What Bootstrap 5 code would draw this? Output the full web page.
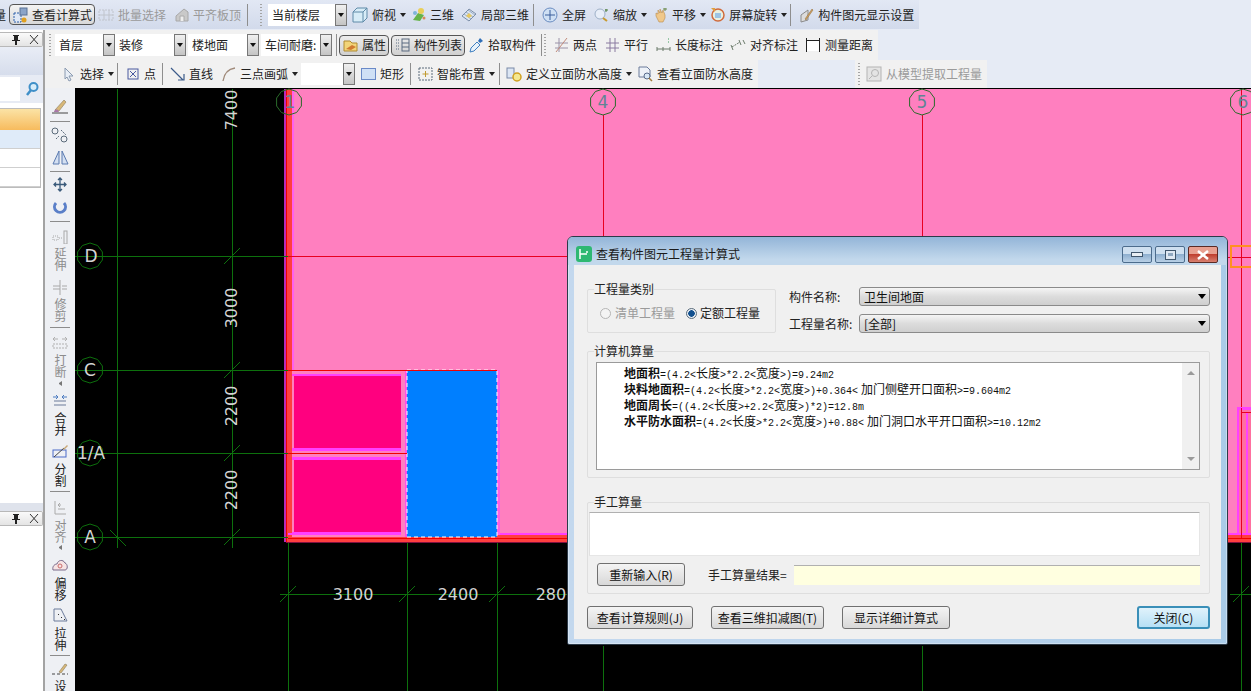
<!DOCTYPE html>
<html lang="zh-CN">
  <head>
    <meta charset="UTF-8" />
    <meta name="viewport" content="width=device-width, initial-scale=1.0" />
    <link rel="stylesheet" href="https://cdn.jsdelivr.net/npm/bootstrap@5.3.3/dist/css/bootstrap.min.css" />
    <title>查看构件图元工程量计算式</title>
    <style>
      body {
        width: 1251px;
        height: 691px;
        overflow: hidden;
        background: #e6ebf5;
        font: 12px/16px "Noto Sans CJK SC", "Liberation Sans", sans-serif;
        color: #222;
      }
      /* toolbars */
      .bar-one { height: 29px; margin-bottom: 1px; background: linear-gradient(#e2e8f4, #d2daeb); width: 919px; flex: none; }
      .bar-two { height: 30px; width: 833px; background: #f1f1f1; }
      .bar-three { height: 28px; width: 713px; background: #f1f1f1; }
      .bar-extra { height: 28px; width: 132px; margin-left: 97px; background: #f1f1f1; }
      .tool { display: inline-flex; align-items: center; gap: 4px; white-space: nowrap; flex: none; }
      .tool svg { flex: none; }
      .tool-off { color: #9a9a9a; }
      .caret-s { height: 0; border: 3px solid transparent; border-top: 4px solid #222; border-bottom: 0; flex: none; width: 6px; }
      .sep-v { width: 1px; height: 22px; background: #8e8e8e; flex: none; }
      .grip-v { width: 2px; height: 22px; flex: none; background: repeating-linear-gradient(#a4a4a4 0 1px, transparent 1px 3px); }
      .press { border: 1px solid #555; border-radius: 4px; background: linear-gradient(#f4f4f4, #d8d8d8); height: 21px; justify-content: flex-start; padding-left: 3px; }
      .press-calc { width: 86px; }
      .press-attr { width: 50px; background: linear-gradient(#ececec, #d0d0d0); }
      .press-list { width: 74px; background: linear-gradient(#ececec, #d0d0d0); }
      .drop { display: flex; height: 22px; background: #fff; flex: none; align-items: center; }
      .drop span { flex: 1; padding-left: 4px; overflow: hidden; white-space: nowrap; }
      .drop i { width: 12px; height: 22px; flex: none; background: linear-gradient(#f0f0f0, #c4c4c4); border: 1px solid #777; position: relative; }
      .drop i::after { content: ""; position: absolute; left: 2px; top: 8px; border: 3px solid transparent; border-top: 4px solid #111; border-bottom: 0; }
      .drop-a { width: 79px; }
      .drop-b { width: 60px; }
      .drop-c { width: 71px; }
      .drop-d { width: 54px; }
      .g2 { margin-left: 2px; } .g3 { margin-left: 3px; } .g4 { margin-left: 4px; }
      .g5 { margin-left: 5px; } .g6 { margin-left: 6px; } .g7 { margin-left: 7px; }
      .g8 { margin-left: 8px; } .g9 { margin-left: 9px; } .g11 { margin-left: 11px; } .g12 { margin-left: 12px; }
      .g18 { margin-left: 18px; }
      .clip-char { width: 6px; overflow: hidden; direction: rtl; flex: none; }
      /* left pane */
      .pane-left { width: 45px; flex: none; border-right: 2px solid #a3a3a3; background: #fff; }
      .pane-head { height: 15px; margin-top: 2px; display: flex; justify-content: flex-end; align-items: center; gap: 8px; padding-right: 3px; border: 1px solid #b8b8b8; border-left: 0; border-radius: 0 2px 2px 0; background: linear-gradient(#fafafa, #e4e4e4); font-size: 11px; }
      .pane-tab { height: 28px; background: linear-gradient(#e9edf6, #d6ddec); }
      .pane-search { height: 28px; background: #e7ebf4; display: flex; align-items: center; gap: 4px; }
      .pane-search i { width: 20px; height: 24px; background: #fff; }
      .pane-list { margin: 5px 2px 0 0; border: 1px solid #bcbcbc; border-left: 0; }
      .pane-row { height: 19px; border-bottom: 1px solid #cfcfcf; }
      .row-orange { height: 21px; background: linear-gradient(#fbe3a6, #f7bb5d); border: 0; }
      .row-blue { background: #dfebf9; }
      .pane-gap { height: 8px; background: #dfe3ec; }
      .pane-gap + .pane-head { margin-top: 0; }
      .pane-top { height: 473px; background: #fff; }
      .icon-pin { width: 10px; height: 11px; }
      /* side toolbar */
      .side-bar { width: 30px; flex: none; height: 603px; overflow: hidden; background: #eef0f4; align-items: center; color: #222; }
      .side-sep { width: 20px; height: 1px; background: #8c8c8c; flex: none; }
      .side-text { writing-mode: vertical-rl; line-height: 14px; flex: none; }
      .side-off { color: #8c8c8c; }
      .side-bar svg { flex: none; }
      .side-mark { width: 0; height: 5px; flex: none; border: 3px solid transparent; border-left: 0; border-right: 3px solid #777; border-top-width: 2.5px; border-bottom-width: 2.5px; }
      .mt5 { margin-top: 5px; } .mt6 { margin-top: 6px; } .mt7 { margin-top: 7px; } .mt8 { margin-top: 8px; } .mt9 { margin-top: 9px; } .mt10 { margin-top: 10px; }
      .mt2 { margin-top: 2px; } .mt3 { margin-top: 3px; } .mt4 { margin-top: 4px; } .mt22 { margin-top: 22px; }
      /* canvas */
      .draw-area { position: relative; width: 1176px; height: 603px; flex: none; overflow: hidden; }
      .draw-area > svg { display: block; }
      .axis-no { font: 17px "DejaVu Sans", sans-serif; text-anchor: middle; }
      .dim-no { font: 16px "DejaVu Sans", sans-serif; fill: #d4d4d4; text-anchor: middle; }
      /* dialog */
      .win-box { position: absolute; left: 492px; top: 148px; width: 661px; height: 409px; border: 1px solid #2c3a48; border-radius: 6px 6px 2px 2px; background: linear-gradient(90deg, #c3d8ee, #bcd4ec 50%, #a9cbe8); box-shadow: 0 0 0 1px rgba(255, 255, 255, .35) inset; }
      .win-title { height: 28px; padding: 9px 9px 0 8px; border-radius: 5px 5px 0 0; background: linear-gradient(#93b5d8, #c2d8ec 80%); color: #1a1a1a; }
      .win-btn { width: 30px; height: 17px; border: 1px solid #4c6c8c; border-radius: 2px; background: linear-gradient(#cfe0f0 45%, #8fb0d0 50%, #b9d0e6); display: flex; align-items: center; justify-content: center; }
      .win-x { background: linear-gradient(#e8a090 45%, #c04030 50%, #d88070); border-color: #5a2a24; }
      .win-body { margin: 0 6px; height: 374px; padding: 0 11px 0 13px; background: #f0f0f0; }
      .grp { border: 1px solid #dedede; border-radius: 2px; }
      .grp-t { width: fit-content; margin: -9px 0 0 6px; background: #f0f0f0; line-height: 16px; }
      .grp-kind { width: 189px; height: 44px; margin-top: 24px; flex: none; }
      .kind-row { padding-left: 12px; }
      .radio-a, .radio-b { width: 11px; height: 11px; border-radius: 50%; border: 1px solid #b5b5b5; background: #f4f4f4; flex: none; }
      .radio-b { border-color: #5b6c7c; background: radial-gradient(circle, #12508f 0 3px, #e8eef4 3.5px); }
      .pick { height: 19px; border: 1px solid #8a8a8a; border-radius: 3px; width: 351px; padding-left: 4px; background: linear-gradient(#f5f5f5, #dcdcdc 50%, #cfcfcf); display: flex; align-items: center; justify-content: space-between; padding-right: 3px; color: #111; }
      .pick::after { content: ""; border: 4px solid transparent; border-top: 5px solid #000; border-bottom: 0; }
      .field-lab { width: 70px; flex: none; color: #222; }
      .grp-calc { height: 127px; margin-top: 18px; }
      .text-well { height: 108px; margin: 3px 9px 0 8px; border: 1px solid #9a9a9a; background: #fff; padding: 2px 0 0 27px; position: relative; line-height: 16px; color: #111; }
      .asc { font: 10px/16px "Liberation Mono", monospace; }
      .well-line { white-space: nowrap; height: 16px; }
      .scroll-track { position: absolute; right: 0; top: 0; bottom: 0; width: 17px; background: #f0f0f0; display: flex; flex-direction: column; justify-content: space-between; align-items: center; padding: 8px 0; }
      .tri-up, .tri-dn { width: 0; height: 0; border: 4px solid transparent; border-top: 0; border-bottom: 4px solid #9a9a9a; }
      .tri-dn { border-bottom: 0; border-top: 4px solid #9a9a9a; }
      .grp-hand { height: 92px; margin-top: 24px; padding: 0 9px 0 1px; }
      .grp-low { margin-left: 5px; }
      .hand-box { height: 44px; margin-top: 2px; border: 1px solid #b0b0b0; border-bottom-color: #e6e6e6; border-left-color: #e0e0e0; border-right-color: #e6e6e6; background: #fff; }
      .dlg-btn { height: 23px; padding: 0; border: 1px solid #707070; border-radius: 3px; background: linear-gradient(#f4f4f4, #d8d8d8); color: #111; font-size: 12px; line-height: 20px; flex: none; }
      .btn-redo { width: 88px; margin-left: 8px; }
      .btn-rule { width: 106px; }
      .btn-3d { width: 113px; margin-left: 18px; }
      .btn-full { width: 108px; margin-left: 18px; }
      .btn-shut { width: 73px; margin-left: auto; border-color: #3a8fb8; border-width: 2px; background: linear-gradient(#e0f2fb, #b6e0f5); line-height: 18px; }
      .res-lab { margin-left: 23px; width: 86px; flex: none; }
      .res-box { width: 406px; height: 20px; background: #ffffe0; border-top: 1px solid #b0b0b0; }
      .win-foot { margin-bottom: 10px; }
    </style>
  </head>

  <body class="d-flex flex-column">
    <!-- top toolbar -->
    <div class="bar-one d-flex align-items-center">
      <span class="clip-char">量</span>
      <span class="tool press press-calc g3">
        <svg width="15" height="16" viewBox="0 0 15 16"><rect x="1" y="6" width="7" height="9" fill="#dfe8f6" stroke="#2c5fa8" stroke-dasharray="2 1"/><rect x="7" y="1" width="7" height="7" fill="#8ba4c8" stroke="#5a7296"/><circle cx="11" cy="13" r="2.5" fill="#e0a020"/></svg>查看计算式
      </span>
      <span class="tool tool-off g3">
        <svg width="16" height="16" viewBox="0 0 16 16" fill="none" stroke="#c0c4cc"><rect x="1" y="3" width="14" height="10" stroke-dasharray="2 1"/><path d="M1 8h14M6 3v10M11 3v10"/></svg>批量选择
      </span>
      <span class="tool tool-off g9">
        <svg width="14" height="16" viewBox="0 0 14 16"><path d="M1 9 9 2l4 3v9H1z" fill="#c9c9c9" stroke="#a8a8a8"/><path d="M5 14V9h4v5" fill="#eee" stroke="#aaa"/></svg>平齐板顶
      </span>
      <span class="sep-v g6"></span>
      <span class="grip-v g12"></span>
      <span class="drop drop-a g6"><span>当前楼层</span><i></i></span>
      <span class="tool g5">
        <svg width="16" height="16" viewBox="0 0 16 16"><path d="M1 5 5 1h10v10l-4 4H1z" fill="#d7ecf7" stroke="#5f8aa8"/><path d="M1 5h10v10M11 5l4-4" fill="none" stroke="#5f8aa8"/></svg>俯视<i class="caret-s"></i>
      </span>
      <span class="tool g6">
        <svg width="14" height="16" viewBox="0 0 14 16"><path d="M1 13 6 6l6 2-4 6z" fill="#66b34a"/><circle cx="9" cy="4" r="3" fill="#e9cf58"/><circle cx="3" cy="6" r="2" fill="#7fb4d8"/><circle cx="12" cy="11" r="1.500" fill="#d88a5a"/></svg>三维
      </span>
      <span class="tool g7">
        <svg width="16" height="16" viewBox="0 0 16 16" fill="none"><path d="M1 9 8 2l7 5-7 7z" fill="#dbe4f0" stroke="#7b8ea8"/><path d="m3 7 7 5M5 5l7 5M7 3l7 5" stroke="#9aaec8"/><path d="m5 9 3-3 3 3-3 2z" fill="#e6c860"/></svg>局部三维
      </span>
      <span class="sep-v g4"></span>
      <span class="tool g8">
        <svg width="16" height="16" viewBox="0 0 16 16"><circle cx="8" cy="8" r="7" fill="#cfe0f4" stroke="#6a8cc0"/><path d="M8 3v10M3 8h10" stroke="#3a5f9c"/></svg>全屏
      </span>
      <span class="tool g8">
        <svg width="15" height="16" viewBox="0 0 15 16"><circle cx="6" cy="7" r="5" fill="#e8eef8" stroke="#9eb0c8"/><path d="m9 11 4 3" stroke="#c89a30" stroke-width="2"/><path d="M12 2v3M11 3h3" stroke="#4a7a3a"/></svg>缩放<i class="caret-s"></i>
      </span>
      <span class="tool g6">
        <svg width="15" height="16" viewBox="0 0 15 16"><path d="M3 9V6l2 1V3l2 3V2l2 4 1-3 2 5v3l-2 4H6z" fill="#f0c88a" stroke="#b88a4a" stroke-width=".6"/><path d="M12 1v3M10 2h4" stroke="#6a8a4a"/></svg>平移<i class="caret-s"></i>
      </span>
      <span class="tool g4">
        <svg width="15" height="16" viewBox="0 0 15 16"><circle cx="8" cy="8" r="6" fill="#e8f0e0" stroke="#d06a3a" stroke-width="1.5"/><path d="M5 6h6v5H5z" fill="#9cc4e4"/><path d="M1 1h4v4z" fill="#e0a040"/></svg>屏幕旋转<i class="caret-s"></i>
      </span>
      <span class="sep-v g3"></span>
      <span class="tool g8">
        <svg width="15" height="16" viewBox="0 0 15 16"><path d="M2 8 9 3v10l-7 2z" fill="#dcdcdc" stroke="#8a8a8a"/><path d="m6 12 7-10 1 1-7 10z" fill="#d0a060" stroke="#8a6a3a" stroke-width=".5"/></svg>构件图元显示设置
      </span>
    </div>

    <div class="d-flex flex-grow-1">
      <!-- left pane, only its right edge is on screen -->
      <div class="pane-left d-flex flex-column">
        <div class="pane-top">
          <div class="pane-head">
            <svg class="icon-pin" viewBox="0 0 10 11"><path d="M2 1h6v1H7v4h2v1H6v4H4V7H1V6h2V2H2z" fill="#222"/></svg>
            <svg class="icon-pin" viewBox="0 0 10 11"><path d="m1 1 8 9M9 1l-8 9" stroke="#333" fill="none"/></svg>
          </div>
          <div class="pane-tab"></div>
          <div class="pane-search">
            <i></i>
            <svg width="16" height="16" viewBox="0 0 16 16"><circle cx="9.500" cy="6" r="4" fill="#d7ecf9" stroke="#3f8fc8" stroke-width="2"/><path d="m7 9-4 5" stroke="#3f8fc8" stroke-width="2.500"/></svg>
          </div>
          <div class="pane-list">
            <div class="pane-row row-orange"></div>
            <div class="pane-row row-blue"></div>
            <div class="pane-row"></div>
            <div class="pane-row"></div>
          </div>
        </div>
        <div class="pane-gap"></div>
        <div class="pane-head">
          <svg class="icon-pin" viewBox="0 0 10 11"><path d="M2 1h6v1H7v4h2v1H6v4H4V7H1V6h2V2H2z" fill="#222"/></svg>
          <svg class="icon-pin" viewBox="0 0 10 11"><path d="m1 1 8 9M9 1l-8 9" stroke="#333" fill="none"/></svg>
        </div>
      </div>

      <div class="d-flex flex-column">
        <div class="bar-two d-flex align-items-center">
          <span class="grip-v g4"></span>
          <span class="drop drop-b g4"><span>首层</span><i></i></span>
          <span class="drop drop-c"><span>装修</span><i></i></span>
          <span class="drop drop-c g2"><span>楼地面</span><i></i></span>
          <span class="drop drop-c g2"><span>车间耐磨:</span><i></i></span>
          <span class="sep-v g4"></span>
          <span class="tool press press-attr g2">
            <svg width="15" height="14" viewBox="0 0 15 14"><path d="M1 3h6l2 2h5v8H1z" fill="#f2d478" stroke="#b08a30"/><path d="m3 11 6-4 4 2-5 3z" fill="#d07a30"/></svg>属性
          </span>
          <span class="tool press press-list g2">
            <svg width="15" height="14" viewBox="0 0 15 14" fill="none" stroke="#5a6a80"><rect x="7" y="1" width="7" height="12"/><path d="M7 5h7M7 9h7" /><path d="M1 2h3M1 5h3M1 8h3M1 11h3" stroke-dasharray="1 1"/></svg>构件列表
          </span>
          <span class="tool g4">
            <svg width="15" height="16" viewBox="0 0 15 16"><path d="m1 15 1-4 6-6 3 3-6 6z" fill="#e8f2fa" stroke="#3f7fc0"/><path d="m9 4 2-3 3 3-3 2z" fill="#2f6fb8"/></svg>拾取构件
          </span>
          <span class="sep-v g5"></span>
          <span class="grip-v g2"></span>
          <span class="tool g8">
            <svg width="15" height="16" viewBox="0 0 15 16" fill="none" stroke="#9a92a8"><path d="M1 6h13M1 11h13M5 1v14"/><path d="M2 15 13 1" stroke="#c08a7a"/></svg>两点
          </span>
          <span class="tool g8">
            <svg width="15" height="16" viewBox="0 0 15 16" fill="none" stroke="#8a7aa0"><path d="M1 6h13M1 11h13M5 1v14M10 1v14"/></svg>平行
          </span>
          <span class="tool g8">
            <svg width="15" height="16" viewBox="0 0 15 16" fill="none" stroke="#6a7a6a"><path d="M1 12h13M1 10v4M14 10v4M7 10v4"/><path d="M12 2h2M12 5h2" stroke="#3a9a5a" stroke-dasharray="1 1"/></svg>长度标注
          </span>
          <span class="tool g7">
            <svg width="16" height="16" viewBox="0 0 16 16" fill="none" stroke="#6a7a6a"><path d="m2 10 8-5" stroke-dasharray="2 1"/><path d="m1 8 2 5M9 3l2 5M13 3l2 4" /></svg>对齐标注
          </span>
          <span class="tool g7">
            <svg width="16" height="16" viewBox="0 0 16 16" fill="none" stroke="#222"><rect x="2" y="3" width="12" height="11" fill="#fff" stroke="none"/><path d="M1.500 1v14M14.500 1v14M1 3.500h14"/></svg>测量距离
          </span>
        </div>

        <div class="d-flex">
          <div class="bar-three d-flex align-items-center">
            <span class="tool g18">
              <svg width="13" height="16" viewBox="0 0 13 16"><path d="m2 2 8 8H6l2 4-2 1-2-4-2 2z" fill="#e8eef6" stroke="#8a9ab0"/></svg>选择<i class="caret-s"></i>
            </span>
            <span class="sep-v g3"></span>
            <span class="tool g9">
              <svg width="13" height="14" viewBox="0 0 13 14" fill="none" stroke="#4a5aa0"><rect x="1" y="2" width="10" height="10"/><path d="m3 4 6 6M9 4l-6 6"/></svg>点
            </span>
            <span class="sep-v g6"></span>
            <span class="tool g7">
              <svg width="15" height="16" viewBox="0 0 15 16" fill="none" stroke="#3a5a8a"><path d="m1 2 12 12M14 8v6H8" stroke-width="1.200"/></svg>直线
            </span>
            <span class="tool g8">
              <svg width="15" height="16" viewBox="0 0 15 16" fill="none" stroke="#a08a7a" stroke-width="1.300"><path d="M2 15C3 8 7 3 14 2"/></svg>三点画弧<i class="caret-s"></i>
            </span>
            <span class="drop drop-d g3"><span></span><i></i></span>
            <span class="tool g6">
              <svg width="15" height="12" viewBox="0 0 15 12"><rect x=".5" y=".5" width="14" height="11" fill="#cfe0f6" stroke="#6a8ac8"/></svg>矩形
            </span>
            <span class="sep-v g6"></span>
            <span class="tool g7">
              <svg width="15" height="16" viewBox="0 0 15 16" fill="none" stroke="#5a6a7a"><rect x="1" y="2" width="13" height="12" stroke-dasharray="2 1"/><path d="M7.500 5v6M4.500 8h6" stroke="#c09a30"/></svg>智能布置<i class="caret-s"></i>
            </span>
            <span class="sep-v g4"></span>
            <span class="tool g6">
              <svg width="16" height="16" viewBox="0 0 16 16"><rect x="1" y="2" width="7" height="10" fill="#dce6f4" stroke="#7a8aa8"/><circle cx="11" cy="11" r="4" fill="#f4e890" stroke="#d0a020" stroke-width="1.500"/></svg>定义立面防水高度<i class="caret-s"></i>
            </span>
            <span class="tool g5">
              <svg width="16" height="16" viewBox="0 0 16 16"><path d="M2 1h8l3 3v7H2z" fill="#eef2f8" stroke="#6a7a9a"/><circle cx="10" cy="10" r="3" fill="#d8e8f6" stroke="#5a6a8a"/><path d="m12 12 3 3" stroke="#a07a3a" stroke-width="1.500"/></svg>查看立面防水高度
            </span>
          </div>
          <div class="bar-extra d-flex align-items-center">
            <span class="grip-v g3"></span>
            <span class="tool tool-off g6">
              <svg width="16" height="16" viewBox="0 0 16 16" fill="none" stroke="#b4b4b4"><rect x="1" y="1" width="14" height="14" fill="#e4e4e4"/><circle cx="9" cy="7" r="3.500"/><path d="m6 10-3 3"/></svg>从模型提取工程量
            </span>
          </div>
        </div>

        <div class="d-flex">
          <!-- side toolbar -->
          <div class="side-bar d-flex flex-column">
            <svg class="mt10" width="18" height="16" viewBox="0 0 18 16"><path d="M1 15h16" stroke="#444"/><path d="m4 12 9-10 2 2-7 9z" fill="#d8b878" stroke="#8a7a5a" stroke-width=".6"/><path d="M3 14c0-2 2-3 4-2l1 2z" fill="#a878a8"/></svg>
            <i class="side-sep mt7"></i>
            <svg class="mt5" width="18" height="16" viewBox="0 0 18 16" fill="none" stroke="#5a6a7a"><circle cx="4" cy="4" r="3"/><circle cx="13" cy="12" r="3"/><path d="m10 3 5 5M5 12l3-3" stroke-dasharray="2 1"/></svg>
            <svg class="mt7" width="17" height="15" viewBox="0 0 17 15" fill="#d4e0f2" stroke="#5a7ab0"><path d="M7 1v13H1zM10 1v13h6z"/></svg>
            <i class="side-sep mt6"></i>
            <svg class="mt5" width="14" height="15" viewBox="0 0 14 15" fill="none" stroke="#3a5a7a" stroke-width="1.300"><path d="M7 1v13M1 7.500h12M5 3l2-2 2 2M5 12l2 2 2-2M3 5.500 1 7.500l2 2M11 5.500l2 2-2 2"/></svg>
            <svg class="mt8" width="14" height="15" viewBox="0 0 14 15" fill="none" stroke="#5a7fc8" stroke-width="3"><path d="M3 3a5.500 5.500 0 1 0 8 0"/></svg>
            <i class="side-sep mt6"></i>
            <svg class="mt8" width="16" height="14" viewBox="0 0 16 14" fill="none" stroke="#a8a8a8"><rect x="12" y="1" width="3" height="13"/><path d="M1 6h5v4H1zM7 8h4" stroke-dasharray="1 1"/></svg>
            <span class="side-text side-off mt3">延伸</span>
            <svg class="mt9" width="16" height="15" viewBox="0 0 16 15" fill="none" stroke="#a8a8a8"><path d="M8 0v15M1 6h7M1 9h7M10 6h5M10 9h5"/></svg>
            <span class="side-text side-off mt3">修剪</span>
            <i class="side-sep mt5"></i>
            <svg class="mt8" width="16" height="13" viewBox="0 0 16 13" fill="none" stroke="#b0b0b0"><path d="M1 3h5M10 3h5M3 1 1 3l2 2M13 1l2 2-2 2"/><rect x="1" y="8" width="14" height="4" stroke-dasharray="2 1"/></svg>
            <span class="side-text side-off mt5">打断</span>
            <i class="side-mark mt3"></i>
            <svg class="mt8" width="16" height="13" viewBox="0 0 16 13" fill="none" stroke="#6a7a9a"><path d="M1 3h5M10 3h5M4 1l2 2-2 2M12 1l-2 2 2 2" stroke="#4a7ac0"/><path d="M2 7h12M2 11h12"/></svg>
            <span class="side-text mt5">合并</span>
            <svg class="mt8" width="17" height="14" viewBox="0 0 17 14"><rect x="1" y="6" width="13" height="7" fill="none" stroke="#4a6ac8"/><path d="M2 13 12 4" stroke="#444"/><path d="m11 5 4-4 1 1-4 4z" fill="#c8a878"/></svg>
            <span class="side-text mt5">分割</span>
            <i class="side-sep mt4"></i>
            <svg class="mt8" width="14" height="15" viewBox="0 0 14 15" fill="none" stroke="#aaa"><path d="M2 1v13M2 14h11M5 9h7M5 5h3M7 3 5 5l2 2" /></svg>
            <span class="side-text side-off mt4">对齐</span>
            <i class="side-mark mt2"></i>
            <svg class="mt8" width="16" height="14" viewBox="0 0 16 14"><path d="M1 12c-1-4 2-6 4-6 1-4 6-5 8-1 3 1 3 7 0 7z" fill="#f6e4e4" stroke="#7a6a8a"/><circle cx="8" cy="8" r="2" fill="none" stroke="#c86a6a"/></svg>
            <span class="side-text mt5">偏移</span>
            <svg class="mt7" width="15" height="14" viewBox="0 0 15 14" fill="none" stroke="#6a7a9a"><path d="M1 1h7l6 12H1z" /><path d="m5 6 1 1M8 9l1 1M11 11l1 1" stroke="#333"/></svg>
            <span class="side-text mt5">拉伸</span>
            <i class="side-sep mt4"></i>
            <svg class="mt7" width="18" height="12" viewBox="0 0 18 12"><path d="M1 11h16" stroke="#444" stroke-dasharray="3 2"/><path d="m8 9 6-8 2 1-6 8z" fill="#d8b878" stroke="#8a7a5a" stroke-width=".6"/></svg>
            <span class="side-text mt5">设</span>
          </div>

          <div class="draw-area">
            <!-- drawing uses page coordinates, so it can be read against the screenshot -->
            <svg width="1176" height="603" viewBox="75 88 1176 603">
              <defs>
                <polygon id="axisRing" points="0,-13 7.600,-10.500 12.400,-4 12.400,4 7.600,10.500 0,13 -7.600,10.500 -12.400,4 -12.400,-4 -7.600,-10.500" fill="none"/>
                <path id="tick" d="M-8 8 8 -8" stroke="#0d700d" fill="none"/>
              </defs>
              <rect x="75" y="88" width="1176" height="603" fill="#000"/>
              <rect x="284" y="89" width="967" height="453" fill="#ff7fbf"/>
              <!-- wall bands -->
              <rect x="284" y="89" width="2" height="453" fill="#b82cb8"/>
              <rect x="286" y="89" width="6" height="453" fill="#ff3f3f"/>
              <rect x="292" y="89" width="2" height="444" fill="#ff60ee"/>
              <rect x="288" y="533" width="963" height="2" fill="#ff40ff"/>
              <rect x="286" y="535" width="965" height="7" fill="#ff3f3f"/>
              <rect x="286" y="542" width="965" height="1" fill="#801040"/>
              <!-- rooms -->
              <rect x="292" y="370" width="115" height="167" fill="#ff7fbf"/>
              <rect x="292" y="374" width="114" height="2" fill="#ff40ff"/>
              <rect x="292" y="448" width="114" height="3" fill="#ff40ff"/>
              <rect x="292" y="457" width="114" height="3" fill="#ff40ff"/>
              <rect x="292" y="532" width="114" height="3" fill="#ff40ff"/>
              <rect x="294" y="376" width="107" height="72" fill="#ff007f"/>
              <rect x="294" y="460" width="107" height="72" fill="#ff007f"/>
              <rect x="401" y="374" width="5" height="161" fill="#ff80c0"/>
              <rect x="405" y="370" width="2" height="167" fill="#ff50e8"/>
              <rect x="497" y="370" width="3" height="165" fill="#ff60e0"/>
              <rect x="407" y="370" width="90" height="167" fill="#007fff"/>
              <rect x="407" y="370" width="90" height="167" fill="none" stroke="#fff" stroke-dasharray="4 3"/>
              <path d="M288 370.500H497M288 453.500H407M286.500 89V542M288 538.500H1251" stroke="#f00000" fill="none"/>
              <!-- axes on the slab -->
              <path d="M603.500 115V240M922.500 115V240M1241.500 89V538M288 256.500H570M1228 257.500H1251" stroke="#e80020" fill="none"/>
              <rect x="1231" y="246" width="21" height="21" fill="none" stroke="#ff9020" stroke-width="2"/>
              <rect x="1237" y="408" width="15" height="125" fill="#ff70a0"/>
              <rect x="1237" y="407" width="15" height="3" fill="#ff40ff"/>
              <rect x="1237" y="408" width="2" height="125" fill="#ff40ff"/>
              <rect x="1246" y="412" width="2" height="121" fill="#ff40ff"/>
              <path d="M1241 412.500H1251M1241.500 408V538" stroke="#e80020" fill="none"/>
              <!-- grid -->
              <path d="M117.500 89V548M232.500 89V548M75 256.500H288M75 370.500H288M75 453.500H288M75 537.500H288" stroke="#0d700d" fill="none"/>
              <path d="M288.500 543V691M407.500 543V691M497.500 543V691M603.500 646V691M922.500 646V691M1241.500 543V691M280 594.500H567M1230 594.500H1251" stroke="#0d700d" fill="none"/>
              <use href="#tick" x="232" y="256"/><use href="#tick" x="232" y="370"/><use href="#tick" x="232" y="453"/><use href="#tick" x="232" y="537"/>
              <use href="#tick" x="288" y="594"/><use href="#tick" x="407" y="594"/><use href="#tick" x="497" y="594"/><use href="#tick" x="1241" y="594"/>
              <path d="M110 530 126 546" stroke="#0d700d" fill="none"/>
              <!-- axis bubbles -->
              <g stroke="#0d700d">
                <use href="#axisRing" x="90" y="256"/><use href="#axisRing" x="90" y="370"/><use href="#axisRing" x="90" y="453"/><use href="#axisRing" x="90" y="537"/>
              </g>
              <g stroke="#2a6a2a">
                <use href="#axisRing" x="289" y="102"/><use href="#axisRing" x="603" y="102"/><use href="#axisRing" x="922" y="102"/><use href="#axisRing" x="1243" y="102"/>
              </g>
              <g class="axis-no" fill="#d4d4d4">
                <text x="91" y="262">D</text><text x="90" y="376">C</text><text x="91" y="459">1/A</text><text x="90" y="543">A</text>
              </g>
              <g class="axis-no" fill="#5f8494">
                <text x="290" y="108">1</text><text x="603" y="108">4</text><text x="922" y="108">5</text><text x="1243" y="108">6</text>
              </g>
              <g class="dim-no">
                <text transform="translate(237 110) rotate(-90)">7400</text>
                <text transform="translate(237 308) rotate(-90)">3000</text>
                <text transform="translate(237 406) rotate(-90)">2200</text>
                <text transform="translate(237 490) rotate(-90)">2200</text>
                <text x="353" y="600">3100</text><text x="458" y="600">2400</text><text x="556" y="600">2800</text>
              </g>
            </svg>

            <!-- calculation dialog -->
            <div class="win-box d-flex flex-column">
              <div class="win-title d-flex align-items-start">
                <svg width="16" height="16" viewBox="0 0 16 16"><rect width="16" height="16" rx="3" fill="#2eb872"/><path d="M4 3v10M4 8h7M11 5v2" stroke="#fff" stroke-width="1.500" fill="none"/></svg>
                <span class="ms-1">查看构件图元工程量计算式</span>
                <span class="ms-auto win-btn"><svg width="12" height="6" viewBox="0 0 12 6"><rect x=".5" y=".5" width="11" height="4" fill="#e8eef4" stroke="#40566c"/></svg></span>
                <span class="win-btn g3"><svg width="11" height="10" viewBox="0 0 11 10"><rect x=".5" y=".5" width="10" height="9" fill="#dfe8f2" stroke="#40566c"/><rect x="3" y="3" width="5" height="3" fill="#90a8c0"/></svg></span>
                <span class="win-btn win-x g3"><svg width="14" height="10" viewBox="0 0 14 10"><path d="m2 1 10 8M12 1 2 9" stroke="#fff" stroke-width="2.500"/></svg></span>
              </div>
              <div class="win-body d-flex flex-column">
                <div class="d-flex">
                  <div class="grp grp-kind">
                    <div class="grp-t">工程量类别</div>
                    <div class="d-flex align-items-center mt8 kind-row">
                      <i class="radio-a"></i><span class="tool-off g4">清单工程量</span>
                      <i class="radio-b g11"></i><span class="g3">定额工程量</span>
                    </div>
                  </div>
                  <div class="d-flex flex-column ms-auto">
                    <div class="d-flex align-items-center mt22">
                      <span class="field-lab">构件名称:</span><span class="pick"><span>卫生间地面</span></span>
                    </div>
                    <div class="d-flex align-items-center mt8">
                      <span class="field-lab">工程量名称:</span><span class="pick"><span>[全部]</span></span>
                    </div>
                  </div>
                </div>
                <div class="grp grp-calc">
                  <div class="grp-t">计算机算量</div>
                  <div class="text-well">
                    <div class="well-line"><b>地面积</b><span class="asc">=(4.2&lt;</span>长度<span class="asc">&gt;*2.2&lt;</span>宽度<span class="asc">&gt;)=9.24m2</span></div>
                    <div class="well-line"><b>块料地面积</b><span class="asc">=(4.2&lt;</span>长度<span class="asc">&gt;*2.2&lt;</span>宽度<span class="asc">&gt;)+0.364&lt;</span><span class="g3">加门侧壁开口面积</span><span class="asc">&gt;=9.604m2</span></div>
                    <div class="well-line"><b>地面周长</b><span class="asc">=((4.2&lt;</span>长度<span class="asc">&gt;+2.2&lt;</span>宽度<span class="asc">&gt;)*2)=12.8m</span></div>
                    <div class="well-line"><b>水平防水面积</b><span class="asc">=(4.2&lt;</span>长度<span class="asc">&gt;*2.2&lt;</span>宽度<span class="asc">&gt;)+0.88&lt;</span><span class="g3">加门洞口水平开口面积</span><span class="asc">&gt;=10.12m2</span></div>
                    <div class="scroll-track"><i class="tri-up"></i><i class="tri-dn"></i></div>
                  </div>
                </div>
                <div class="grp grp-hand">
                  <div class="grp-t grp-low">手工算量</div>
                  <div class="hand-box"></div>
                  <div class="d-flex align-items-center mt7">
                    <button type="button" class="dlg-btn btn-redo">重新输入(R)</button>
                    <span class="res-lab">手工算量结果=</span>
                    <span class="res-box"></span>
                  </div>
                </div>
                <div class="d-flex mt-auto win-foot">
                  <button type="button" class="dlg-btn btn-rule">查看计算规则(J)</button>
                  <button type="button" class="dlg-btn btn-3d">查看三维扣减图(T)</button>
                  <button type="button" class="dlg-btn btn-full">显示详细计算式</button>
                  <button type="button" class="dlg-btn btn-shut">关闭(C)</button>
                </div>
              </div>
            </div>
          </div>
        </div>
      </div>
    </div>
    <script src="https://cdn.jsdelivr.net/npm/bootstrap@5.3.3/dist/js/bootstrap.bundle.min.js"></script>
  </body>
</html>
